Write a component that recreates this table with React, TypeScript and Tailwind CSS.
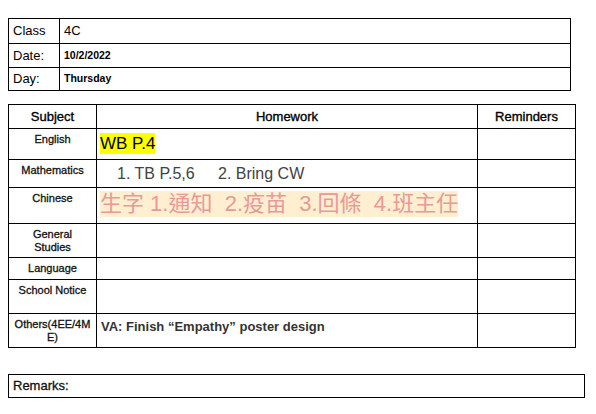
const subjects = [
  { name: "English", h: "h-[31px]" },
  { name: "Mathematics", h: "h-[28px]" },
  { name: "Chinese", h: "h-[36px]" },
  { name: "General Studies", h: "h-[34px]" },
  { name: "Language", h: "h-[22px]" },
  { name: "School Notice", h: "h-[34px]" },
  { name: "Others(4EE/4ME)", h: "h-[34px]" },
];

function Homework({ subject }: { subject: string }) {
  if (subject === "English") {
    return (
      <span className="ml-[3px] mt-[4px] inline-block bg-[#ffff00] text-[17px] leading-[21px] text-black">
        WB P.4
      </span>
    );
  }
  if (subject === "Mathematics") {
    return (
      <div className="ml-[20px] mt-[5px] flex text-[16px] leading-[18px] text-[#434343]">
        <span className="w-[101px]">1. TB P.5,6</span>
        <span>2. Bring CW</span>
      </div>
    );
  }
  if (subject === "Chinese") {
    return (
      <span className="ml-[3px] mt-[3px] inline-block whitespace-pre bg-[#fdefcf] text-[22px] leading-[26px] text-[#ea9999]">
        {"生字 1.通知  2.疫苗  3.回條  4.班主任"}
      </span>
    );
  }
  if (subject === "Others(4EE/4ME)") {
    return (
      <div className="ml-[4px] mt-[5px] text-[13px] font-bold leading-[15px] text-[#333]">
        VA: Finish “Empathy” poster design
      </div>
    );
  }
  return null;
}

export default function App() {
  return (
    <div className="h-[414px] w-[596px] bg-white font-['Liberation_Sans',Arial,'Noto_Sans_CJK_TC',sans-serif] text-black">
      <div className="px-[8px] pt-[18px]">
        <table className="w-[563px] table-fixed border-collapse">
          <tbody>
            <tr className="h-[25px]">
              <td className="w-[51px] border border-black pl-[4px] text-[13px]">Class</td>
              <td className="border border-black pl-[4px] text-[13px]">4C</td>
            </tr>
            <tr className="h-[24px]">
              <td className="border border-black pl-[4px] text-[13px]">Date:</td>
              <td className="border border-black pl-[4px] text-[10.5px] font-bold">10/2/2022</td>
            </tr>
            <tr className="h-[23px]">
              <td className="border border-black pl-[4px] text-[13px]">Day:</td>
              <td className="border border-black pl-[4px] text-[10.5px] font-bold">Thursday</td>
            </tr>
          </tbody>
        </table>

        <table className="mt-[13px] w-[568px] table-fixed border-collapse">
          <tbody>
            <tr className="h-[24px] text-[13px] [-webkit-text-stroke:0.35px_black]">
              <td className="w-[88px] border border-black text-center">Subject</td>
              <td className="w-[381px] border border-black text-center">Homework</td>
              <td className="border border-black text-center">Reminders</td>
            </tr>
            {subjects.map((s) => (
              <tr key={s.name} className={s.h}>
                <td className="border border-black px-[3px] pt-[4px] align-top">
                  <div className="break-all text-center text-[11px] leading-[13px] text-[#111] [-webkit-text-stroke:0.3px_#111]">
                    {s.name === "General Studies" ? (
                      <>
                        General
                        <br />
                        Studies
                      </>
                    ) : (
                      s.name
                    )}
                  </div>
                </td>
                <td className="border border-black p-0 align-top">
                  <Homework subject={s.name} />
                </td>
                <td className="border border-black" />
              </tr>
            ))}
          </tbody>
        </table>

        <div className="mt-[26px] flex h-[24px] w-[577px] items-center border border-black pl-[4px] text-[13px] text-[#111] [-webkit-text-stroke:0.3px_#111]">
          Remarks:
        </div>
      </div>
    </div>
  );
}
